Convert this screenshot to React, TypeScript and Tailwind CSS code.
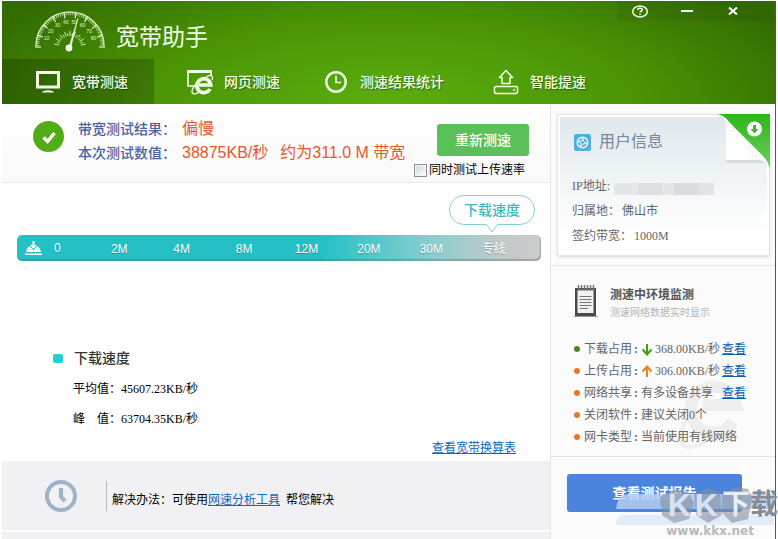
import type { ReactNode } from "react";

const scaleMarks = ["2M", "4M", "8M", "12M", "20M", "30M", "专线"];

const monitorRows = [
  { label: "下载占用", value: "368.00KB/秒", arrow: "down", link: true },
  { label: "上传占用", value: "306.00KB/秒", arrow: "up", link: true },
  { label: "网络共享", value: "有多设备共享", arrow: "", link: true },
  { label: "关闭软件", value: "建议关闭0个", arrow: "", link: false },
  { label: "网卡类型", value: "当前使用有线网络", arrow: "", link: false },
];

const polar = (r: number, deg: number) => {
  const a = (deg * Math.PI) / 180;
  return [36 - r * Math.cos(a), 38 - r * Math.sin(a)];
};

const Gauge = () => (
  <svg width="72" height="46" viewBox="0 0 72 46" fill="none" aria-hidden="true">
    <path d="M2 37A34 34 0 0 1 70 37" stroke="#cfeab0" strokeWidth="1.5" />
    <path d="M4 37A32 32 0 0 1 68 37" stroke="#cfeab0" strokeWidth="2.5" strokeDasharray="0.8 1.2" />
    {Array.from({ length: 10 }, (_, i) => {
      const [x1, y1] = polar(29, i * 20);
      const [x2, y2] = polar(35, i * 20);
      return <line key={i} x1={x1} y1={y1} x2={x2} y2={y2} stroke="#e2f5cc" strokeWidth="1.2" />;
    })}
    {Array.from({ length: 17 }, (_, i) => {
      const [x1, y1] = polar(11, 10 + i * 10);
      const [x2, y2] = polar(i % 2 ? 14 : 16, 10 + i * 10);
      return <line key={i} x1={x1} y1={y1} x2={x2} y2={y2} stroke="#cfeab0" strokeWidth="1" />;
    })}
    {[10, 20, 30, 40, 50, 60, 70, 80].map((n, i) => {
      const [x, y] = polar(25, 20 + i * 20);
      return (
        <text key={n} x={x} y={y + 2} fontSize="5" textAnchor="middle" fill="#e2f5cc">
          {n}
        </text>
      );
    })}
    <path d="M35 38L44 9L37 38Z" fill="#f0ffe0" stroke="#f0ffe0" strokeWidth="0.5" />
    <circle cx="35" cy="39" r="3.4" fill="#f4ffe8" />
  </svg>
);

const MonitorIcon = () => (
  <svg width="26" height="24" viewBox="0 0 26 24" fill="none" aria-hidden="true">
    <rect x="2.5" y="2.5" width="21" height="14.5" stroke="#f1ffe4" strokeWidth="3" />
    <path d="M7 22.5C8 19.5 18 19.5 19 22.5Z" fill="#f1ffe4" />
  </svg>
);

const BrowserIcon = () => (
  <svg width="28" height="26" viewBox="0 0 28 26" fill="none" aria-hidden="true">
    <path d="M8 17H2V2.5H25V7" stroke="#f1ffe4" strokeWidth="1.6" />
    <path d="M1 2.5H26" stroke="#f1ffe4" strokeWidth="3" />
    <path d="M24 20A7 7 0 1 1 24.8 16H13" stroke="#f1ffe4" strokeWidth="3.6" />
    <path d="M11 14C5 20 4 26 10 24.6C12 24 14 23 15 22" stroke="#f1ffe4" strokeWidth="1.3" />
    <path d="M20 8C24 5.5 28 6 26 11" stroke="#f1ffe4" strokeWidth="1.3" />
  </svg>
);

const ClockIcon = () => (
  <svg width="24" height="24" viewBox="0 0 24 24" fill="none" stroke="#f1ffe4" aria-hidden="true">
    <circle cx="12" cy="12" r="9.7" strokeWidth="2.4" />
    <path d="M12 5.5V12.5H17" strokeWidth="1.6" />
  </svg>
);

const BoostIcon = () => (
  <svg width="26" height="26" viewBox="0 0 26 26" fill="none" stroke="#f1ffe4" aria-hidden="true">
    <path d="M13 1.5L19.5 8.5H17V14.5H9V8.5H6.5Z" strokeWidth="1.5" strokeLinejoin="round" />
    <rect x="1.5" y="17.5" width="23" height="7" rx="1.5" strokeWidth="1.5" />
    <path d="M20 21H22" strokeWidth="1.5" />
  </svg>
);

const tabs: { name: string; icon: ReactNode; style: string }[] = [
  { name: "宽带测速", icon: <MonitorIcon />, style: "w-[152px] bg-black/20" },
  { name: "网页测速", icon: <BrowserIcon />, style: "w-[136px]" },
  { name: "测速结果统计", icon: <ClockIcon />, style: "w-[170px]" },
  { name: "智能提速", icon: <BoostIcon />, style: "w-[136px]" },
];

const Header = () => (
  <header className="bg-[radial-gradient(ellipse_58%_150%_at_50%_100%,#5aae10_0%,#4b9405_55%,#336d02_100%)] text-[#f1ffe4]">
    <div className="flex h-[58px] items-start justify-between">
      <div className="flex items-start gap-2.5 pt-2 pl-8">
        <Gauge />
        <h1 className="pt-2.5 text-[23px] leading-9 font-normal">宽带助手</h1>
      </div>
      <div className="flex h-5 w-[157px] items-center justify-between bg-black/5 pr-8 pl-3">
        <button type="button" aria-label="帮助" className="flex h-5 w-5 items-center justify-center">
          <svg width="18" height="13" viewBox="0 0 18 13" fill="none">
            <ellipse cx="9" cy="6.5" rx="7.3" ry="5.5" stroke="#f1ffe4" strokeWidth="1.5" />
            <path d="M6.8 5C6.8 2.8 11.2 2.8 11.2 5C11.2 6.3 9 6.2 9 7.6M9 8.8V10" stroke="#f1ffe4" strokeWidth="1.5" />
          </svg>
        </button>
        <button type="button" aria-label="最小化" className="flex h-5 w-5 items-center justify-center">
          <span className="h-0.5 w-3 bg-white"></span>
        </button>
        <button type="button" aria-label="关闭" className="flex h-5 w-5 items-center justify-center">
          <svg width="10" height="8" viewBox="0 0 10 8">
            <path d="M1 0.5L9 7.5M9 0.5L1 7.5" stroke="#fff" strokeWidth="2" />
          </svg>
        </button>
      </div>
    </div>
    <nav className="flex h-[45px]">
      {tabs.map((tab) => (
        <button
          key={tab.name}
          type="button"
          className={`flex shrink-0 items-center gap-2.5 pl-8 text-sm font-medium whitespace-nowrap [text-shadow:1px_1px_1px_rgba(0,0,0,0.4)] ${tab.style}`}
        >
          <span className="flex w-7 shrink-0 justify-center">{tab.icon}</span>
          {tab.name}
        </button>
      ))}
    </nav>
  </header>
);

const Result = () => (
  <section className="flex h-[79px] items-start border-b border-[#ececec] bg-linear-to-b from-white to-[#fafafa] pt-[17px] pl-[31px]">
    <svg width="31" height="31" viewBox="0 0 31 31" aria-hidden="true">
      <circle cx="15.5" cy="15.5" r="15.5" fill="#52ac16" />
      <path d="M10.5 16.5L14.5 20.5L21.5 12" fill="none" stroke="#fff" strokeWidth="3.4" />
    </svg>
    <dl className="-mt-1 ml-3.5 grid grid-cols-[98px_auto] gap-x-1.5 leading-6 whitespace-nowrap">
      <dt className="text-sm leading-6 font-medium text-[#4a63a3]">带宽测试结果：</dt>
      <dd className="text-base leading-6 text-[#e9552b]">偏慢</dd>
      <dt className="text-sm leading-6 font-medium text-[#4a63a3]">本次测试数值：</dt>
      <dd className="flex gap-3 text-base leading-6 text-[#e9552b]">
        <span>38875KB/秒</span>
        <span>约为311.0 M 带宽</span>
      </dd>
    </dl>
    <div className="ml-auto flex flex-col items-end pt-[3px] pr-[21px]">
      <button type="button" className="h-8 w-[92px] rounded-[3px] bg-[#5cc05a] text-sm font-medium text-white">
        重新测速
      </button>
      <label className="mt-1.5 mr-1 flex items-center gap-0.5 text-xs leading-4 whitespace-nowrap text-black">
        <input
          type="checkbox"
          className="h-[13px] w-[13px] appearance-none border border-[#8e8f8f] bg-linear-to-br from-[#cfd3d6] to-white shadow-[inset_0_0_0_1px_#f4f4f4]"
        />
        同时测试上传速率
      </label>
    </div>
  </section>
);

const Meter = () => (
  <section className="pt-3">
    <div className="mr-[15px] flex justify-end">
      <div className="relative h-[30px] w-[86px] rounded-full border border-[#7fcfd0] text-center text-sm leading-7 font-medium text-[#3bb8bd]">
        下载速度
        <svg className="absolute top-7 left-9" width="12" height="9" viewBox="0 0 12 9" aria-hidden="true">
          <path d="M0 0H12L6 8Z" fill="#fff" />
          <path d="M0.5 0.5L6 8L11.5 0.5" fill="none" stroke="#8fc9cc" />
        </svg>
      </div>
    </div>
    <div className="mt-2.5 mr-[9px] ml-[15px] flex h-[26px] items-center rounded-[5px] bg-[linear-gradient(90deg,#25c0c6_58%,#8ccfd0_80%,#c2c8c8_92%,#cccccc_100%)] pr-4 text-xs leading-[26px] text-white shadow-[inset_-1px_-2px_1px_rgba(90,110,110,0.4)] [text-shadow:0_1px_1px_rgba(0,0,0,0.25)]">
      <div className="flex w-[71px] shrink-0 items-center gap-3 pl-2">
        <svg width="17" height="15" viewBox="0 0 17 15" fill="#fff" aria-hidden="true">
          <path d="M7.500 0H9.500V4H12L8.500 8L5 4H7.500Z" />
          <path d="M1 11C2 7 3.500 5.500 5 5.500L8.500 9.500L12 5.500C13.500 5.500 15 7 16 11Z" />
          <rect x="0" y="12.5" width="17" height="1.5" />
        </svg>
        <span>0</span>
      </div>
      {scaleMarks.map((mark) => (
        <span key={mark} className="flex-1 pt-0.5 text-center">
          {mark}
        </span>
      ))}
    </div>
  </section>
);

const Stats = () => (
  <section className="flex grow flex-col pt-[82px] pl-[51px] text-xs text-black">
    <h2 className="flex items-center gap-[11px] text-sm leading-[30px] font-medium text-[#333]">
      <span className="h-[9px] w-2.5 rounded-[2px] bg-[#1ed2d8]"></span>
      下载速度
    </h2>
    <dl className="ml-5 grid grid-cols-[48px_auto] pt-px font-[Liberation_Serif,'Noto_Sans_CJK_SC',serif] leading-[30px]">
      <dt>平均值：</dt>
      <dd>45607.23KB/秒</dd>
      <dt>峰&emsp;值：</dt>
      <dd>63704.35KB/秒</dd>
    </dl>
    <div className="mt-auto mr-[34px] mb-[3px] text-right leading-5">
      <a href="#convert" className="text-[#0a6abf] underline">
        查看宽带换算表
      </a>
    </div>
  </section>
);

const Solution = () => (
  <footer className="bg-[#f1f1f3]">
    <div className="flex h-[71px] items-center border-b-2 border-white pl-[43px] text-xs text-black">
      <svg width="32" height="32" viewBox="0 0 32 32" fill="none" aria-hidden="true">
        <circle cx="16" cy="16" r="14" stroke="#9fb3c8" strokeWidth="4" />
        <path d="M16 8V17L20 21" stroke="#9fb3c8" strokeWidth="4" />
      </svg>
      <div className="ml-[29px] h-[30px] w-px bg-[#b9b9bf]"></div>
      <p className="ml-[5px] pt-2 leading-5 whitespace-nowrap">
        解决办法：可使用
        <a href="#tool" className="mr-1.5 text-[#0a6abf] underline">
          网速分析工具
        </a>
        帮您解决
      </p>
    </div>
    <div className="h-[7px]"></div>
  </footer>
);

const UserCard = () => (
  <section className="relative mt-[10px] mr-[5px] ml-1.5 h-[142px] border border-[#e3e5e6] bg-white p-0.5 shadow-sm">
    <div className="h-full bg-linear-to-b from-[#e0e8ed] to-white to-85% pl-3.5">
      <h2 className="flex items-center gap-2 pt-[11px] text-base leading-7 font-normal text-[#74889a]">
        <svg width="17" height="17" viewBox="0 0 17 17" aria-hidden="true">
          <rect width="17" height="17" rx="2" fill="#4fb0e0" />
          <circle cx="8.5" cy="8.5" r="5.3" fill="none" stroke="#e8f8ff" strokeWidth="1.4" />
          <path d="M8.500 3.500L10 8L13.500 9.500L9 10L6.500 13L7 9L3.500 7L8 7Z" fill="none" stroke="#e8f8ff" />
        </svg>
        用户信息
      </h2>
      <dl className="-ml-0.5 pt-[18px] font-[Liberation_Serif,'Noto_Sans_CJK_SC',serif] text-xs leading-[25px] text-[#666]">
        <div className="flex items-center gap-1">
          <dt>IP地址:</dt>
          <dd className="flex pt-1" aria-label="已隐藏">
            <span className="h-3 w-6 bg-[#e6e6e8]"></span>
            <span className="h-3 w-6 bg-[#dfdfe1]"></span>
            <span className="h-3 w-3 bg-[#e6e6e8]"></span>
            <span className="h-3 w-6 bg-[#dcdcde]"></span>
            <span className="h-3 w-4 bg-[#e3e3e5]"></span>
          </dd>
        </div>
        <div className="flex gap-0.5">
          <dt>归属地：</dt>
          <dd>佛山市</dd>
        </div>
        <div className="flex gap-0.5">
          <dt>签约带宽：</dt>
          <dd>1000M</dd>
        </div>
      </dl>
    </div>
    <svg className="absolute -top-px -right-px" width="55" height="57" viewBox="0 0 55 57" aria-hidden="true">
      <defs>
        <linearGradient id="fold" x1="0" y1="0" x2="0" y2="1">
          <stop offset="0" stopColor="#2fb51b" />
          <stop offset="1" stopColor="#6fd062" />
        </linearGradient>
        <linearGradient id="paper" x1="0" y1="1" x2="1" y2="0">
          <stop offset="0.4" stopColor="#fff" />
          <stop offset="1" stopColor="#dfe3e6" />
        </linearGradient>
      </defs>
      <path d="M2 0H55V57C54 50 51 47 46 44L14 8C10 3 7 1 2 0Z" fill="url(#fold)" />
      <path d="M11 46H48L51 49H12Z" fill="#d3dae0" />
      <path d="M2 0C9 2 11 6 11 14V46H42C50 46 54 50 55 57C54 48 50 44 46 40L16 10C11 4 8 1 2 0Z" fill="url(#paper)" />
      <circle cx="39.5" cy="15" r="7.5" fill="#fff" />
      <path d="M38 11H41V15H43.500L39.500 19.500L35.500 15H38Z" fill="#48b236" />
    </svg>
  </section>
);

const NotepadIcon = () => (
  <svg width="24" height="34" viewBox="0 0 24 34" aria-hidden="true">
    <rect x="1" y="4" width="21" height="28" fill="#4a4a4a" />
    <rect x="3.5" y="6" width="16" height="23" fill="#f1f1f1" />
    <path d="M5.500 12.500H17.500M5.500 15.500H17.500M5.500 18.500H17.500M5.500 21.500H17.500M5.500 24.500H14" stroke="#777" />
    <path d="M4.500 1V7M7.500 1V7M10.500 1V7M13.500 1V7M16.500 1V7M19.500 1V7" stroke="#777" strokeWidth="1.5" />
    <path d="M0 32.500H24" stroke="#999" />
  </svg>
);

const Arrow = ({ dir }: { dir: string }) => (
  <svg
    width="12"
    height="13"
    viewBox="0 0 12 13"
    className={dir === "up" ? "mr-0.5 shrink-0 rotate-180 text-[#ee8019]" : "mr-0.5 shrink-0 text-[#4a9a12]"}
    aria-hidden="true"
  >
    <path d="M6 1V11M1.500 6.500L6 11.500L10.500 6.500" fill="none" stroke="currentColor" strokeWidth="2" />
  </svg>
);

const Monitor = () => (
  <section className="relative mt-[9px] border-y border-[#e6e6e6] pt-[18px] pb-2 pl-[23px]">
    <svg className="absolute right-6 bottom-1 opacity-60" width="76" height="84" viewBox="0 0 76 84" fill="none" aria-hidden="true">
      <path d="M58 54A23 23 0 1 1 61 37H28" stroke="#e6e6e8" strokeWidth="12" />
      <path d="M18 42C2 62 0 84 20 78C28 76 36 70 42 64" stroke="#e6e6e8" strokeWidth="4" />
    </svg>
    <div className="relative">
      <div className="flex gap-3">
        <NotepadIcon />
        <div className="pt-px">
          <h2 className="text-xs leading-5 font-bold text-[#555]">测速中环境监测</h2>
          <p className="text-[10px] leading-4 text-[#b5b5b5]">测速网络数据实时显示</p>
        </div>
      </div>
      <ul className="mt-[17px] font-[Liberation_Serif,'Noto_Sans_CJK_SC',serif] text-xs leading-[22px] whitespace-nowrap text-[#666]">
        {monitorRows.map((row, i) => (
          <li key={row.label} className="flex items-center">
            <span className={`h-1.5 w-1.5 shrink-0 rounded-full ${i === 0 ? "bg-[#4d8423]" : "bg-[#e8762b]"}`}></span>
            <span className="ml-1 flex w-[57px] shrink-0 gap-0.5">
              {row.label}
              <b>:</b>
            </span>
            <span className="flex w-[81px] shrink-0 items-center">
              {row.arrow && <Arrow dir={row.arrow} />}
              {row.value}
            </span>
            {row.link && (
              <a href="#detail" className="text-[#0a5fb0] underline">
                查看
              </a>
            )}
          </li>
        ))}
      </ul>
    </div>
  </section>
);

const Watermark = () => (
  <div className="pointer-events-none absolute right-0 bottom-0 h-[54px] w-[162px]" aria-hidden="true">
    <svg className="absolute inset-0" width="162" height="54" viewBox="0 0 162 54">
      <path d="M0 24C2 10 8 9 16 9H158V24Z" fill="#b5cdf2" fillOpacity="0.85" />
      <path d="M0 40C0 30 8 30 14 30H158V40Z" fill="#dfe9f9" fillOpacity="0.9" />
      <path
        d="M44 12L58 4L72 7L78 18L73 34L58 38L46 30ZM78 9L92 3L104 8L106 30L92 38L80 30ZM106 9L120 2L132 4L136 14L132 34L116 38L106 28Z"
        fill="#858f9f"
        fillOpacity="0.6"
      />
    </svg>
    <div className="absolute top-0 right-0 flex items-center leading-10 font-bold whitespace-nowrap">
      <span className="flex gap-1 pr-1 text-[32px] text-[#d8e2f2]">
        <span>K</span>
        <span>K</span>
      </span>
      <span className="text-[28px] text-[#e8eef6]">下</span>
      <span className="text-[28px] text-[#858a94]">载</span>
    </div>
    <div className="absolute right-6 bottom-0 font-['DejaVu_Sans'] text-xs leading-4 font-bold text-[#b9b9bd]">
      www.kkx.net
    </div>
  </div>
);

const App = () => {
  return (
    <div className="relative flex min-h-screen flex-col bg-white px-0.5 pt-px font-['Liberation_Sans','Noto_Sans_CJK_SC',sans-serif]">
      <div className="flex grow flex-col border-r border-[#555]">
        <Header />
        <div className="flex grow">
          <main className="flex min-w-0 grow flex-col">
            <Result />
            <Meter />
            <Stats />
            <Solution />
          </main>
          <aside className="w-[225px] shrink-0 border-l border-[#e6e6e6] bg-[#fbfbfb]">
            <UserCard />
            <Monitor />
            <button
              type="button"
              className="mt-[17px] ml-4 h-[38px] w-[175px] rounded-[3px] bg-[#4a84dc] text-sm font-bold text-white"
            >
              查看测试报告
            </button>
          </aside>
        </div>
      </div>
      <Watermark />
    </div>
  );
};

export default App;
